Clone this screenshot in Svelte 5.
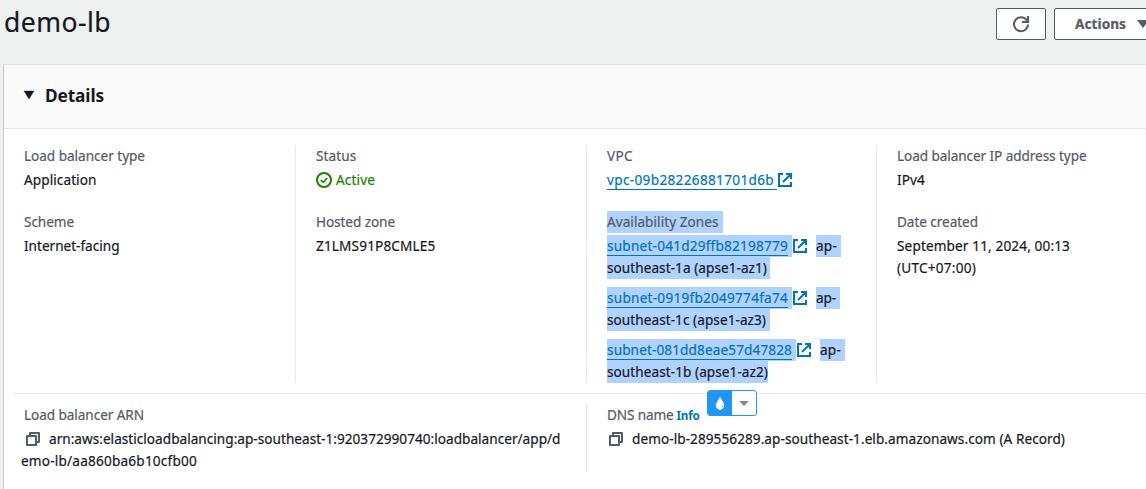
<script>
  const zones = [
    { id: 'subnet-041d29ffb82198779', idWidth: 181, ap: 25, name: 'southeast-1a (apse1-az1)', nameWidth: 160, pad: 3 },
    { id: 'subnet-0919fb2049774fa74', idWidth: 181, ap: 24, name: 'southeast-1c (apse1-az3)', nameWidth: 159, pad: 4 },
    { id: 'subnet-081dd8eae57d47828', idWidth: 185, ap: 25, name: 'southeast-1b (apse1-az2)', nameWidth: 161, pad: 0 }
  ];

  // Spreads a label's glyphs so that the text takes exactly `width` pixels.
  function fit(node, width) {
    const natural = node.getBoundingClientRect().width;
    node.style.letterSpacing = (width - natural) / node.textContent.length + 'px';
  }
</script>

{#snippet t(text, width)}<span class="fit" use:fit={width}>{text}</span>{/snippet}

{#snippet external()}
  <svg class="external" width="16" height="16" viewBox="0 0 16 16" fill="none" stroke="#0073bb" stroke-width="2">
    <path d="M6 2H2v12h12v-4M9 2h5v5M6 10l8-8" />
  </svg>
{/snippet}

{#snippet copy()}
  <svg class="copy" width="16" height="16" viewBox="0 0 16 16" fill="none" stroke="#545b64" stroke-width="2" stroke-linejoin="round">
    <path d="M2 5h9v9H2zM5 5V2h9v9h-3" />
  </svg>
{/snippet}

<div class="page">
  <header>
    <h1>{@render t('demo-lb', 107)}</h1>
    <div class="buttons">
      <button class="refresh" aria-label="Refresh">
        <svg width="18" height="18" viewBox="0 0 18 18" fill="none" stroke="#545b64" stroke-width="2">
          <path d="M16 9.500A7 7 0 1 1 14.600 5L16 6.800M16 1v6h-6" />
        </svg>
      </button>
      <button class="actions">
        {@render t('Actions', 51)}
        <svg width="12" height="8" viewBox="0 0 12 8"><path d="M0 0h12L6 8z" fill="#545b64" /></svg>
      </button>
    </div>
  </header>

  <section class="card">
    <div class="card-head">
      <svg width="10" height="8" viewBox="0 0 10 8"><path d="M0 0h10L5 8z" fill="#16191f" stroke="#16191f" stroke-width=".4" /></svg>
      <h2>{@render t('Details', 59)}</h2>
    </div>

    <div class="grid">
      <div class="col">
        <div class="item">
          <div class="label">{@render t('Load balancer type', 121)}</div>
          <div class="value">{@render t('Application', 72.5)}</div>
        </div>
        <div class="item">
          <div class="label">{@render t('Scheme', 50)}</div>
          <div class="value">{@render t('Internet-facing', 95.5)}</div>
        </div>
      </div>

      <div class="col">
        <div class="item">
          <div class="label">{@render t('Status', 40.5)}</div>
          <div class="value active">
            <svg width="16" height="16" viewBox="0 0 16 16" fill="none" stroke="#1d8102" stroke-width="2">
              <circle cx="8" cy="8" r="7" /><path d="M4.8 8l2.4 2.3 4-4.3" stroke-width="1.7" />
            </svg>
            {@render t('Active', 39)}
          </div>
        </div>
        <div class="item">
          <div class="label">{@render t('Hosted zone', 79)}</div>
          <div class="value">{@render t('Z1LMS91P8CMLE5', 119.5)}</div>
        </div>
      </div>

      <div class="col third">
        <div class="item">
          <div class="label">{@render t('VPC', 26)}</div>
          <div class="value"><a class="link vpc">{@render t('vpc-09b28226881701d6b', 167)}</a>{@render external()}</div>
        </div>
        <div class="item">
          <div class="label"><mark class="title">{@render t('Availability Zones', 111.5)}</mark></div>
          {#each zones as z}
            <div class="zone">
              <div class="value">
                <mark class="subnet"><a class="link">{@render t(z.id, z.idWidth)}</a></mark>{@render external()}<mark class="ap">{@render t('ap-', z.ap - 4)}</mark>
              </div>
              <div class="value"><mark style:padding-right="{z.pad}px">{@render t(z.name, z.nameWidth)}</mark></div>
            </div>
          {/each}
        </div>
      </div>

      <div class="col">
        <div class="item">
          <div class="label">{@render t('Load balancer IP address type', 189.5)}</div>
          <div class="value">{@render t('IPv4', 28)}</div>
        </div>
        <div class="item">
          <div class="label">{@render t('Date created', 81)}</div>
          <div class="value">{@render t('September 11, 2024, 00:13', 173)}</div>
          <div class="value">{@render t('(UTC+07:00)', 79)}</div>
        </div>
      </div>
    </div>

    <div class="bottom">
      <div class="col arn">
        <div class="label">{@render t('Load balancer ARN', 120)}</div>
        <div class="value">{@render copy()}{@render t('arn:aws:elasticloadbalancing:ap-southeast-1:920372990740:loadbalancer/app/d', 511.5)}</div>
        <div class="value rest">{@render t('emo-lb/aa860ba6b10cfb00', 176)}</div>
      </div>
      <div class="col dns">
        <div class="label">
          {@render t('DNS name', 66.5)}<a class="info">{@render t('Info', 23)}</a>
          <div class="popup">
            <span class="drop">
              <svg width="10" height="14" viewBox="0 0 10 14"><path d="M5 0C5.4 3 9.2 6 9.2 9.5A4.2 4.2 0 0 1 .8 9.5C.8 6 4.6 3.500 5 0z" fill="#fff" /><path d="M6.300 11.700a2.400 2.400 0 0 0 1.300-2.200" fill="none" stroke="#2196f3" stroke-width=".8" /></svg>
            </span>
            <span class="caret"><svg width="10" height="5" viewBox="0 0 10 5"><path d="M0 0h10L5 5z" fill="#888" /></svg></span>
          </div>
        </div>
        <div class="value">{@render copy()}{@render t('demo-lb-289556289.ap-southeast-1.elb.amazonaws.com (A Record)', 433)}</div>
      </div>
    </div>
  </section>
</div>

<style>
  :global(body) { background: #eff1f1; overflow: hidden; }
  .page {
    width: 1146px; height: 489px; overflow: hidden;
    display: flex; flex-direction: column;
    font: 13.6px/22px "Noto Sans", "Open Sans", sans-serif;
    color: #16191f;
    -webkit-text-stroke: 0.2px;
  }
  .fit { display: inline-block; white-space: pre; vertical-align: top; flex: none; }
  header { display: flex; justify-content: space-between; height: 64px; flex: none; }
  h1 { margin: 4px 0 0 4px; font-size: 26.5px; line-height: 36px; font-weight: 400; }
  .buttons { display: flex; gap: 8px; padding-top: 8px; width: 150px; flex: none; }
  button {
    box-sizing: border-box; height: 32px; padding: 0; flex: none;
    display: flex; align-items: center;
    border: 1px solid #545b64; border-radius: 2px; background: #fff;
    font: 700 13.6px/22px "Noto Sans", "Open Sans", sans-serif; color: #545b64;
  }
  .refresh { width: 50px; justify-content: center; }
  .actions { width: 118px; padding-left: 20px; gap: 11px; }
  .card { margin-left: 3px; border-left: 1px solid #c8cbcb; border-top: 1px solid #e1e6e6; background: #fff; flex: 1; }
  .card-head {
    height: 63px; display: flex; align-items: center; gap: 11px; padding-left: 20px;
    background: #fafafa; border-bottom: 1px solid #e3e8e8;
  }
  .card-head svg { overflow: visible; margin-bottom: 3px; }
  h2 { margin: 0 0 2px; font-size: 17.3px; line-height: 22px; font-weight: 700; -webkit-text-stroke: 0; }
  .grid {
    display: grid; grid-template-columns: 292px 291px 290px 269px; grid-template-rows: 238px;
    height: 238px; padding: 16px 0 10px;
  }
  .col { border-right: 1px solid #e6e8e8; padding-left: 20px; box-sizing: border-box; }
  .col:last-child { border-right: 0; }
  .item { margin-bottom: 20px; }
  .label { color: #545b64; height: 22px; margin-bottom: 2px; display: flex; }
  .value { display: flex; height: 22px; align-items: center; }
  .active { color: #1d8102; gap: 4px; }
  .zone { margin-bottom: 8px; }
  .link { color: #0073bb; height: 22px; display: block; background: linear-gradient(#0073bb, #0073bb) 0 20px / 100% 1px no-repeat; }
  .vpc { padding-right: 3px; }
  mark { background: #b0d2ff; color: inherit; height: 22px; display: block; }
  .title { padding-right: 4px; }
  .subnet { padding-right: 4px; }
  .ap { margin-left: 8px; padding-right: 4px; }
  .external, .copy { flex: none; }
  .bottom { display: grid; grid-template-columns: 573px 559px; margin-left: 10px; border-top: 1px solid #e6e8e8; padding-top: 10px; height: 68px; }
  .arn { padding-left: 10px; }
  .arn .copy { margin: 0 8px 0 1px; }
  .rest { margin-left: -3px; }
  .dns .copy { margin: 0 8px 0 1px; }
  .dns .label { position: relative; }
  .info { color: #0073bb; font-size: 11.6px; font-weight: 700; margin: 1px 0 0 3px; -webkit-text-stroke: 0; }
  .popup {
    position: absolute; left: 100px; top: -14px; width: 50px; height: 26px; box-sizing: border-box;
    border: 1px solid #2196f3; border-radius: 3px; background: #fff; display: flex; overflow: hidden;
  }
  .drop { width: 24px; background: #2196f3; display: flex; align-items: center; justify-content: center; }
  .caret { flex: 1; display: flex; align-items: center; justify-content: center; }
</style>
